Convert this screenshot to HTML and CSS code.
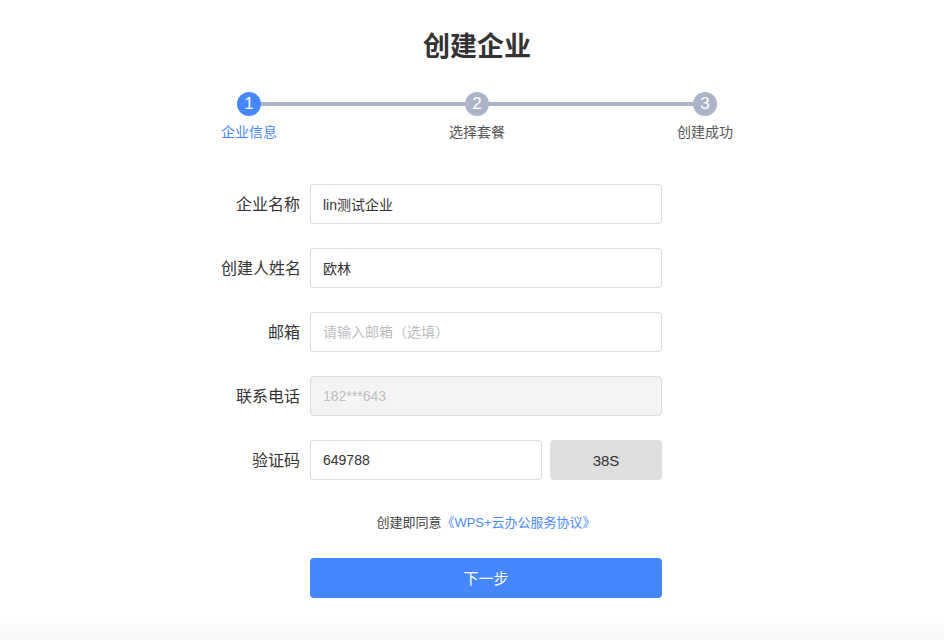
FILE: index.html
```html
<!DOCTYPE html>
<html lang="zh-CN">
<head>
    <meta charset="UTF-8">
    <meta name="viewport" content="width=device-width, initial-scale=1.0">
    <title>创建企业</title>
    <link rel="stylesheet" href="styles.css">
</head>
<body>

    <div class="page">
        <h1 class="title">创建企业</h1>

        <div class="steps">
            <div class="step active">
                <div class="step-num">1</div>
                <div class="step-label">企业信息</div>
            </div>
            <div class="step">
                <div class="step-num">2</div>
                <div class="step-label">选择套餐</div>
            </div>
            <div class="step">
                <div class="step-num">3</div>
                <div class="step-label">创建成功</div>
            </div>
        </div>

        <form class="form" onsubmit="return false">
            <div class="form-row">
                <label>企业名称</label>
                <input class="input" type="text" value="lin测试企业">
            </div>
            <div class="form-row">
                <label>创建人姓名</label>
                <input class="input" type="text" value="欧林">
            </div>
            <div class="form-row">
                <label>邮箱</label>
                <input class="input" type="text" placeholder="请输入邮箱（选填）">
            </div>
            <div class="form-row">
                <label>联系电话</label>
                <input class="input" type="text" value="182***643" disabled>
            </div>
            <div class="form-row">
                <label>验证码</label>
                <input class="input input-code" type="text" value="649788">
                <button class="code-btn" type="button">38S</button>
            </div>

            <div class="agreement">创建即同意<a href="#">《WPS+云办公服务协议》</a></div>

            <button class="next-btn" type="submit">下一步</button>
        </form>
    </div>

</body>
</html>
```

FILE: styles.css
```css
body {
    font-family: "Liberation Sans", "Noto Sans CJK SC", sans-serif;
    margin: 0;
    min-height: 100vh;
    color: #333;
    background: linear-gradient(to bottom, #fff 616px, #f8f8f8 640px);
}
.page {
    width: 512px;
    margin: 0 auto;
    padding-left: 10px;
    padding-top: 29px;
}
.title {
    margin: 0;
    font-size: 27px;
    line-height: 36px;
    font-weight: bold;
    text-align: center;
    color: #333;
}
.steps {
    position: relative;
    display: flex;
    justify-content: space-between;
    margin-top: 27px;
}
/* connector line behind the step circles */
.steps::before {
    content: "";
    position: absolute;
    left: 28px;
    right: 28px;
    top: 10px;
    height: 4px;
    background-color: #abb3c8;
}
.step {
    position: relative;
    width: 56px;
    display: flex;
    flex-direction: column;
    align-items: center;
}
.step-num {
    width: 24px;
    height: 24px;
    border-radius: 50%;
    background-color: #abb3c8;
    color: #fff;
    font-size: 17px;
    line-height: 24px;
    text-align: center;
}
.step-label {
    margin-top: 8px;
    font-size: 14px;
    line-height: 16px;
    white-space: nowrap;
    color: #555;
}
.step.active .step-num {
    background-color: #4687ff;
}
.step.active .step-label {
    color: #4687ff;
}
.form {
    margin-top: 44px;
}
.form-row {
    display: flex;
    align-items: center;
    gap: 10px;
    height: 40px;
    margin-bottom: 24px;
}
.form-row label {
    width: 79px;
    flex-shrink: 0;
    padding-bottom: 3px;
    text-align: right;
    font-size: 16px;
    color: #333;
    white-space: nowrap;
}
.input {
    box-sizing: border-box;
    width: 352px;
    height: 40px;
    padding: 0 12px 1px;
    border: 1px solid #dadada;
    border-radius: 4px;
    font-family: inherit;
    font-size: 14px;
    color: #333;
    background-color: #fff;
    outline: none;
}
.input::placeholder {
    color: #bdbdbd;
}
.input:disabled {
    background-color: #f4f4f4;
    color: #bdbdbd;
}
.input-code {
    width: 232px;
    margin-right: -2px;
}
.code-btn {
    width: 112px;
    height: 40px;
    border: none;
    border-radius: 4px;
    background-color: #dedede;
    font-family: inherit;
    font-size: 15px;
    color: #333;
}
.agreement {
    margin: 33px 0 0 89px;
    width: 352px;
    text-align: center;
    font-size: 13px;
    line-height: 20px;
    color: #444;
}
.agreement a {
    color: #4a8aff;
    text-decoration: none;
}
.next-btn {
    display: block;
    width: 352px;
    height: 40px;
    margin: 25px 0 0 89px;
    padding-bottom: 2px;
    border: none;
    border-radius: 4px;
    background-color: #4687ff;
    color: #fff;
    font-family: inherit;
    font-size: 15px;
}
```
